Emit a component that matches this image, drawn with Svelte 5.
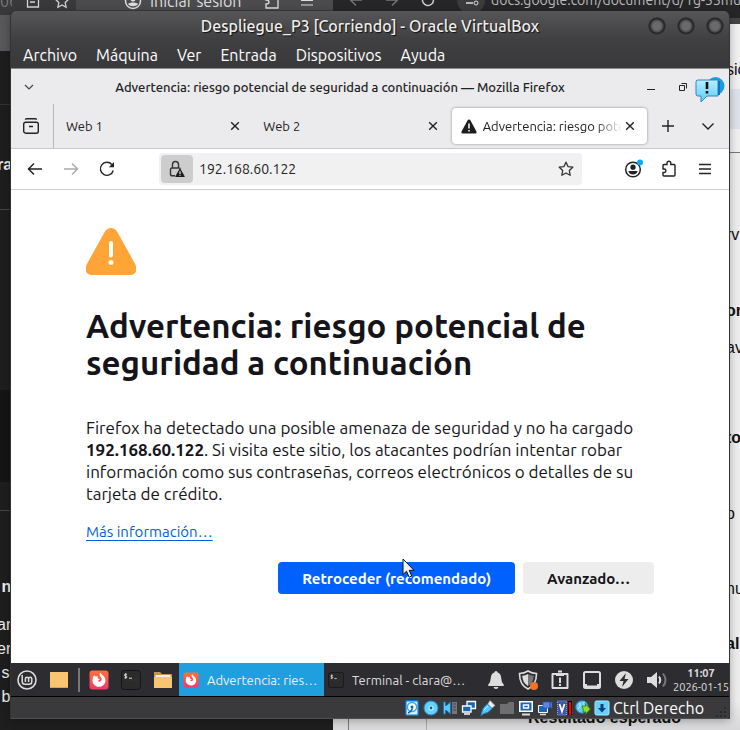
<script>
  const menus = ['Archivo', 'Máquina', 'Ver', 'Entrada', 'Dispositivos', 'Ayuda'];

  const tabs = [
    { title: 'Web 1' },
    { title: 'Web 2' },
    { title: 'Advertencia: riesgo potencial de seguridad', warning: true }
  ];

  // text of the windows behind, gap is the free space above each line
  const leftLines = [
    { text: 'ra', gap: 155, bold: true },
    { text: ' n', gap: 402, bold: true },
    { text: 'ar', gap: 18 },
    { text: 'er', gap: 4 },
    { text: ' s', gap: 4 },
    { text: ' b', gap: 4 }
  ];
  const rightLines = [
    { text: 'sic', gap: 60 },
    { text: 'rv', gap: 145 },
    { text: 'or', gap: 56, bold: true },
    { text: 'av', gap: 17 },
    { text: 'to', gap: 70, bold: true },
    { text: 'o', gap: 56 },
    { text: 'nu', gap: 55 },
    { text: 'al', gap: 35, bold: true }
  ];

  let activeTab = $state(2);
  let address = $state('192.168.60.122');
</script>

{#snippet cross()}
  <svg width="10" height="10" viewBox="0 0 10 10"><path d="M1.2 1.2l7.6 7.6M8.8 1.2L1.2 8.8" stroke="#222" stroke-width="1.4" /></svg>
{/snippet}

{#snippet firefox(size)}
  <svg width={size} height={size} viewBox="0 0 20 20">
    <defs>
      <linearGradient id="fox" x1="0" y1="0" x2="0" y2="1">
        <stop offset="0" stop-color="#ff7139" /><stop offset="1" stop-color="#f6376b" />
      </linearGradient>
    </defs>
    <rect x="0.5" y="0.5" width="19" height="19" rx="3" fill="url(#fox)" />
    <path d="M4.200 6.500l.9-1.300 1.400 1.300L9 6.200c-1.200 1.500-.2 2.600 1.800 2.800-.4 1.200-1.700 1-1.700 1.900.6 1.300 3.400.9 3.600-1.400.1-2-1.500-2.800-2-4.200-.3-1 0-1.900.6-2.600 1 1.700 5.200 3.700 5.200 7.800 0 3.700-2.900 6.300-6.500 6.300S3.500 14.200 3.500 10.700c0-1.700.2-3 .7-4.200z" fill="#fff" />
  </svg>
{/snippet}

{#snippet terminal(size)}
  <svg width={size} height={size} viewBox="0 0 20 20">
    <rect x="0.5" y="0.5" width="19" height="19" rx="3" fill="#2b2b2b" stroke="#151515" />
    <path d="M1.500 10h17" stroke="#333" />
    <path d="M6 4.200H4.300q-.8.100-.8.900t.8.900h.8q.8.100.8.900t-.8.900H3.400M4.700 3.300v5.400M8 8.200h3" fill="none" stroke="#ddd" />
  </svg>
{/snippet}

<div class="desktop">
  <div class="back left-browser" aria-hidden="true">
    <div class="back-bar">
      <span class="back-url">06</span>
      <svg width="14" height="14" viewBox="0 0 14 14"><path d="M1.500 1h11v12h-11zM4 5h6M4 8h5" fill="none" stroke="#d5d5d5" stroke-width="1.300" /></svg>
      <svg width="16" height="16" viewBox="0 0 16 16"><path d="M8 1.500l2 4.200 4.600.6-3.400 3.200.9 4.700L8 11.900l-4.100 2.300.9-4.700L1.400 6.300 6 5.700z" fill="none" stroke="#d5d5d5" stroke-width="1.300" /></svg>
      <span class="login">
        <svg width="18" height="18" viewBox="0 0 18 18"><circle cx="9" cy="9" r="7.500" fill="none" stroke="#ddd" stroke-width="1.500" /><circle cx="9" cy="7" r="2.500" fill="#ddd" /><path d="M4 12c2-2 8-2 10 0-2 3-8 3-10 0z" fill="#ddd" /></svg>
        Iniciar sesión
      </span>
      <svg width="16" height="16" viewBox="0 0 16 16"><path d="M2 3h4q0-2 2-2t2 2h4v12H2v-4q3 0 3-2T2 7z" fill="none" stroke="#ddd" stroke-width="1.300" /></svg>
      <svg class="burger" width="14" height="14" viewBox="0 0 14 14"><path d="M1 2h12M1 6.500h12M1 11h12" stroke="#ddd" stroke-width="1.200" /></svg>
    </div>
    <div class="back-lines">
      {#each leftLines as line}
        <p class:bold={line.bold} style:margin-top="{line.gap}px">{line.text}</p>
      {/each}
    </div>
  </div>

  <div class="back right-browser" aria-hidden="true">
    <div class="back-bar">
      <svg width="14" height="14" viewBox="0 0 14 14"><path d="M13 7H1.500M7 1.500L1.500 7 7 12.500" fill="none" stroke="#777" stroke-width="1.400" /></svg>
      <svg width="14" height="14" viewBox="0 0 14 14"><path d="M1 7h11.500M7 1.500L12.500 7 7 12.500" fill="none" stroke="#777" stroke-width="1.400" /></svg>
      <svg width="14" height="14" viewBox="0 0 14 14"><path d="M12.500 7A5.500 5.500 0 1 1 10 2.400" fill="none" stroke="#ccc" stroke-width="1.500" /></svg>
      <svg width="28" height="28" viewBox="0 0 28 28"><circle cx="14" cy="14" r="14" fill="#3b3b3d" /><path d="M8 11h7M9 17h7" stroke="#ddd" stroke-width="1.600" /><circle cx="18" cy="11" r="2" fill="none" stroke="#ddd" /><circle cx="19" cy="17" r="2" fill="none" stroke="#ddd" /></svg>
      <span>docs.google.com/document/d/1g-33mul</span>
    </div>
    <div class="back-lines">
      {#each rightLines as line}
        <p class:bold={line.bold} style:margin-top="{line.gap}px">{line.text}</p>
      {/each}
    </div>
    <strong class="result">Resultado esperado</strong>
  </div>

  <section class="vm">
    <header class="vm-title">
      <h2>Despliegue_P3 [Corriendo] - Oracle VirtualBox</h2>
      <div class="vm-buttons">
        <button aria-label="Minimizar"></button>
        <button aria-label="Maximizar"></button>
        <button aria-label="Cerrar"></button>
      </div>
    </header>

    <nav class="vm-menu">
      {#each menus as menu}
        <button>{menu}</button>
      {/each}
    </nav>

    <div class="guest">
      <div class="ff-title">
        <svg width="10" height="10" viewBox="0 0 10 10"><path d="M1 3l4 4 4-4" fill="none" stroke="#444" stroke-width="1.200" /></svg>
        <h3>Advertencia: riesgo potencial de seguridad a continuación — Mozilla Firefox</h3>
        <button aria-label="Minimizar"><svg width="10" height="10" viewBox="0 0 10 10"><path d="M1 7.500h8" stroke="#222" /></svg></button>
        <button aria-label="Restaurar"><svg width="10" height="10" viewBox="0 0 10 10"><path d="M1.500 3.500h5v5h-5zM3.500 1.500h5v5" fill="none" stroke="#222" /></svg></button>
        <svg class="notice" width="30" height="28" viewBox="0 0 30 28">
          <defs><linearGradient id="bubble" x1="0" y1="0" x2="0" y2="1"><stop offset="0" stop-color="#b5efff" /><stop offset="1" stop-color="#5bcdf8" /></linearGradient></defs>
          <circle cx="20.500" cy="10" r="9" fill="#179fdc" />
          <path d="M3 4h20v16H12l-6 6v-6H3q-2 0-2-2V6q0-2 2-2z" fill="url(#bubble)" stroke="#3583c9" />
          <path d="M24 5v14" stroke="#1772b5" stroke-width="2" />
          <path d="M12 6v7M12 15v2.500" stroke="#111" stroke-width="2.600" />
        </svg>
      </div>

      <div class="tab-bar">
        <button class="recent" aria-label="Ver pestañas recientes">
          <svg width="18" height="18" viewBox="0 0 18 18"><rect x="1.700" y="5.200" width="14.600" height="11" rx="2" fill="none" stroke="#222" stroke-width="1.400" /><path d="M3.500 2.700q0-.9 1-.9h9q1 0 1 .9M7 9.500h4" fill="none" stroke="#222" stroke-width="1.400" /></svg>
        </button>
        <div class="tabs">
          {#each tabs as tab, index}
            <div class="tab" class:active={index === activeTab}>
              <button class="tab-label" onclick={() => (activeTab = index)}>
                {#if tab.warning}
                  <svg width="16" height="15" viewBox="0 0 16 15"><path d="M8 .5q1 0 1.500 1l5.800 10.800q.9 2-1 2.200H1.700q-1.900-.2-1-2.200L6.500 1.500Q7 .5 8 .5z" fill="#1d1d1f" /><path d="M8 4.500v5M8 11v1.500" stroke="#fff" stroke-width="1.500" /></svg>
                {/if}
                <span>{tab.title}</span>
              </button>
              <button class="close" aria-label="Cerrar pestaña">{@render cross()}</button>
            </div>
          {/each}
        </div>
        <button class="new-tab" aria-label="Nueva pestaña"><svg width="14" height="14" viewBox="0 0 14 14"><path d="M7 1v12M1 7h12" stroke="#222" stroke-width="1.400" /></svg></button>
        <button class="all-tabs" aria-label="Listar pestañas"><svg width="14" height="14" viewBox="0 0 14 14"><path d="M1.500 4.500L7 10l5.500-5.500" fill="none" stroke="#222" stroke-width="1.400" /></svg></button>
      </div>

      <div class="toolbar">
        <button aria-label="Atrás"><svg width="16" height="16" viewBox="0 0 16 16"><path d="M15 8H1.800M7 2.500L1.500 8 7 13.500" fill="none" stroke="#222" stroke-width="1.500" /></svg></button>
        <button aria-label="Adelante"><svg width="16" height="16" viewBox="0 0 16 16"><path d="M1 8h13.200M9 2.500L14.500 8 9 13.500" fill="none" stroke="#aaa" stroke-width="1.500" /></svg></button>
        <button aria-label="Recargar"><svg width="16" height="16" viewBox="0 0 16 16"><path d="M14.200 9.500A6.500 6.500 0 1 1 12.800 3.500" fill="none" stroke="#222" stroke-width="1.400" /><path d="M15 1v5.200H9.800z" fill="#222" /></svg></button>
        <div class="url">
          <button class="lock" aria-label="Conexión no segura">
            <svg width="16" height="18" viewBox="0 0 16 18"><path d="M3.500 8V4.500a3 3 0 0 1 6 0V8M6 15.800H3q-1.500 0-1.500-1.500V9.500Q1.500 8 3 8h7q1.500 0 1.500.8" fill="none" stroke="#333" stroke-width="1.400" /><path d="M11 9l4.300 7.500H6.700z" fill="#1d1d1f" stroke="#1d1d1f" stroke-linejoin="round" /><path d="M11 11.300v2.700M11 14.800v1" stroke="#fff" stroke-width="1.100" /></svg>
          </button>
          <input type="text" aria-label="Dirección" bind:value={address} />
          <button class="star" aria-label="Añadir a marcadores">
            <svg width="16" height="16" viewBox="0 0 16 16"><path d="M8 1.200l2 4.400 4.800.6-3.500 3.300.9 4.800L8 12l-4.200 2.300.9-4.800L1.200 6.200 6 5.600z" fill="none" stroke="#333" stroke-width="1.300" stroke-linejoin="round" /></svg>
          </button>
        </div>
        <button aria-label="Cuenta"><svg width="20" height="20" viewBox="0 0 20 20"><circle cx="10" cy="10.500" r="7.300" fill="none" stroke="#222" stroke-width="1.500" /><circle cx="10" cy="8.200" r="2.600" fill="#222" /><path d="M5.300 12h9.400q-1 3.500-4.700 3.500T5.300 12z" fill="#222" /><circle cx="17" cy="3.500" r="3" fill="#00b0ff" /></svg></button>
        <button aria-label="Extensiones"><svg width="16" height="18" viewBox="0 0 16 18"><path d="M2 5.500q0-1 1-1h3V3.200a1.900 1.900 0 0 1 3.800 0v1.300H13q1 0 1 1V15q0 1-1 1H3q-1 0-1-1v-2.500h1.200a1.700 1.700 0 0 0 0-3.500H2z" fill="none" stroke="#222" stroke-width="1.400" /></svg></button>
        <button aria-label="Menú"><svg width="14" height="14" viewBox="0 0 14 14"><path d="M1 2.500h12M1 7h12M1 11.500h12" stroke="#222" stroke-width="1.300" /></svg></button>
      </div>

      <main>
        <div class="warning">
          <svg width="50" height="48" viewBox="0 0 50 48"><path d="M25 0q4 0 6.200 3.800l17.800 32Q52 42 48.500 45.500 47 47 43.500 47h-37Q3 47 1.500 45.500-2 42 1 35.800l17.800-32Q21 0 25 0z" fill="#ffa436" /><path d="M25 15v12.500" stroke="#fff" stroke-width="4" stroke-linecap="round" /><circle cx="25" cy="34.500" r="2.500" fill="#fff" /></svg>
          <h1>Advertencia: riesgo potencial de seguridad a continuación</h1>
          <p>Firefox ha detectado una posible amenaza de seguridad y no ha cargado <b>192.168.60.122</b>. Si visita este sitio, los atacantes podrían intentar robar información como sus contraseñas, correos electrónicos o detalles de su tarjeta de crédito.</p>
          <a href="#info">Más información…</a>
          <div class="actions">
            <button class="primary">
              Retroceder (recomendado)
              <svg class="pointer" width="14" height="22" viewBox="0 0 14 22"><path d="M1 1v15.500l3.500-3.300 2.600 6 2.600-1.200-2.500-5.700H12z" fill="#f2f2f2" stroke="#111" /></svg>
            </button>
            <button>Avanzado…</button>
          </div>
        </div>
      </main>

      <footer class="panel">
        <button aria-label="Menú Mint"><svg width="20" height="20" viewBox="0 0 20 20"><circle cx="10" cy="10" r="9" fill="none" stroke="#ddd" stroke-width="1.600" /><path d="M5.200 5v6.500q0 2.800 2.800 2.800h4q2.800 0 2.800-2.800V8.800a1.600 1.600 0 0 0-3.200 0V12M8.400 12V8.800a1.600 1.600 0 0 1 3.200 0" fill="none" stroke="#ddd" stroke-width="1.500" /></svg></button>
        <button aria-label="Escritorio"><svg width="18" height="18" viewBox="0 0 18 18"><rect y="1" width="18" height="16" fill="#f8c471" /><path d="M0 16.500h18" stroke="#d9a24f" /></svg></button>
        <span class="divider"></span>
        <button aria-label="Firefox">{@render firefox(20)}</button>
        <button aria-label="Terminal">{@render terminal(20)}</button>
        <button aria-label="Archivos"><svg width="20" height="18" viewBox="0 0 20 18"><path d="M1 1h6l2 2h10v5H1z" fill="#c89448" /><path d="M2.500 4h15v3h-15z" fill="#f5f0e8" /><path d="M1 6h18v11H1z" fill="#f8c471" /></svg></button>
        <button class="task current">{@render firefox(16)}<span>Advertencia: riesgo potencial</span></button>
        <button class="task">{@render terminal(16)}<span>Terminal - clara@clara-VirtualBox</span></button>
        <div class="tray">
          <svg width="20" height="20" viewBox="0 0 20 20"><path d="M10 1q1.500 0 1.700 1.500Q15 3.700 15.200 8q.2 4.500 2.500 6.500v1.500H2.300v-1.500Q4.600 12.500 4.800 8 5 3.700 8.300 2.500 8.500 1 10 1zM7.500 17h5q-.5 2-2.500 2t-2.500-2z" fill="#ddd" /></svg>
          <svg width="20" height="20" viewBox="0 0 20 20"><path d="M10 1q4 2.500 8.500 2.500Q18.500 15 10 19 1.500 15 1.500 3.500 6 3.500 10 1z" fill="none" stroke="#ddd" stroke-width="1.600" /><path d="M10 4v12Q4.500 13 4.200 5.800 7.500 5.500 10 4z" fill="#ddd" /><path d="M10 4v12q5.500-3 5.800-10.200Q12.500 5.500 10 4z" fill="#777" /><circle cx="16" cy="16" r="4" fill="#f37329" /></svg>
          <svg width="20" height="20" viewBox="0 0 20 20"><path d="M2.500 4h15v14h-15z" fill="none" stroke="#ddd" stroke-width="2" stroke-linejoin="round" /><path d="M6 3h8v3H6z" fill="#ddd" /><path d="M8 1.500h4" stroke="#ddd" stroke-width="2" /><path d="M10 7.500V13M10 14v2" stroke="#ddd" stroke-width="2" /></svg>
          <svg width="20" height="20" viewBox="0 0 20 20"><rect x="2" y="2" width="16" height="16" rx="1.500" fill="none" stroke="#ddd" stroke-width="2" /><path d="M3 17v-3h2v3zM15 17v-3h2v3zM5 15.500h10V17H5z" fill="#ddd" /></svg>
          <svg width="20" height="20" viewBox="0 0 20 20"><circle cx="10" cy="10" r="9" fill="#ddd" /><path d="M12 3l-6.500 8h4L8 17l6.500-8h-4z" fill="#2d2d31" /></svg>
          <svg width="22" height="20" viewBox="0 0 22 20"><path d="M1 7h4l6-5v16l-6-5H1z" fill="#ddd" /><path d="M13 6.500q2.500 3.500 0 7" fill="none" stroke="#ddd" stroke-width="2" /><path d="M17 3.500q5 6.500 0 13" fill="none" stroke="#777" stroke-width="2" /></svg>
        </div>
        <time><b>11:07</b><span>2026-01-15</span></time>
      </footer>
    </div>

    <footer class="status">
      <svg width="16" height="16" viewBox="0 0 16 16"><rect x="1.800" y=".8" width="12.400" height="14.400" rx="1" fill="#d5f3ff" stroke="#0872d6" stroke-width="1.500" /><circle cx="8" cy="7" r="4.600" fill="#fff" stroke="#35a9ee" stroke-width="1.500" /><circle cx="8" cy="7" r="1.500" fill="#0960a8" /><path d="M4 13q3-1 4.500-4.500" fill="none" stroke="#0960a8" stroke-width="1.500" /></svg>
      <svg width="16" height="16" viewBox="0 0 16 16"><circle cx="8" cy="8" r="7" fill="#61d2fb" stroke="#2788cf" /><circle cx="8" cy="8" r="2.600" fill="#c5f2ff" /><circle cx="8" cy="8" r="1.400" fill="#095ba5" /></svg>
      <svg width="16" height="16" viewBox="0 0 16 16"><path d="M10 2h5v12h-5z" fill="#777" /><path d="M11 4h3M11 7h3M11 10h3" stroke="#444" /><path d="M1.500 2v12h2v-3.500h1l4 3.500V2l-4 3.500h-1V2z" fill="#58c8f5" stroke="#1a70b9" /></svg>
      <svg width="16" height="16" viewBox="0 0 16 16"><path d="M6 1.500h8.500v7H6z" fill="#1767b7" stroke="#fff" stroke-width="1.300" /><path d="M1.500 6h8.500v6H1.500z" fill="#1767b7" stroke="#fff" stroke-width="1.300" /><path d="M3 14h6" stroke="#fff" stroke-width="1.500" /></svg>
      <svg width="16" height="16" viewBox="0 0 16 16"><path d="M10 .5l5 5-3.500 3-4-4z" fill="#e9eef2" stroke="#999" stroke-width=".6" /><path d="M7.500 4l4.500 4.500q-4 5-8 5L1 15.500l1-3.500q0-4 5.500-8z" fill="#5bc9f8" stroke="#2382ca" /><path d="M4 10l4-4" stroke="#c2efff" /></svg>
      <svg width="16" height="16" viewBox="0 0 16 16"><path d="M1 4h7l2-2h5v12H1z" fill="#6e6e70" /></svg>
      <svg width="16" height="16" viewBox="0 0 16 16"><rect x="1" y="1" width="14" height="11" fill="#fff" /><path d="M2.500 2.500h11v8h-11z" fill="#1767b7" /><path d="M5.500 5h5v3h-5z" fill="#1767b7" stroke="#fff" stroke-width="1.400" /><path d="M4 14.500h8" stroke="#ddd" stroke-width="2" /></svg>
      <svg width="16" height="16" viewBox="0 0 16 16"><path d="M1.500 5.500h9v7h-9z" fill="#1767b7" stroke="#fff" /><path d="M3 14.500h6" stroke="#ddd" stroke-width="1.500" /><path d="M6 2h7v6H6zM13 3.500l2-2v7l-2-2z" fill="#5a87e6" stroke="#2750a8" stroke-width=".7" /></svg>
      <svg width="16" height="16" viewBox="0 0 16 16"><rect x="1.500" y="1" width="9" height="14" fill="#3b55b5" stroke="#91a4ea" stroke-dasharray="1 1" /><path d="M3.500 4L6 11.500 8.500 4" fill="none" stroke="#fff" stroke-width="1.700" /><path d="M14 1v14" stroke="#000" stroke-width="4" /><path d="M14 2v13" stroke="#f00" stroke-width="2.400" /></svg>
      <svg width="16" height="16" viewBox="0 0 16 16"><circle cx="7" cy="7" r="6.200" fill="#62cdf7" stroke="#2382ca" /><path d="M3 9q3-2 2-6M9 1.500v5" stroke="#c8f1ff" fill="none" /><path d="M7 6h4l-1-2.500 5.500 5.500-5.500 6 1-3H8q1-2.500-1-6z" fill="#8be02f" stroke="#2d6c09" stroke-width=".8" /></svg>
      <svg width="16" height="16" viewBox="0 0 16 16"><rect x="1" y="1" width="14" height="14" rx="1.500" fill="#64d2fc" stroke="#a9e8ff" /><path d="M6.500 4h3v4H12l-4 4.500L4 8h2.500z" fill="#083e74" /></svg>
      <span>Ctrl Derecho</span>
      <svg class="grip" width="12" height="12" viewBox="0 0 12 12"><path d="M9 1h2v2H9zM5 5h2v2H5zM9 5h2v2H9zM1 9h2v2H1zM5 9h2v2H5zM9 9h2v2H9z" fill="#29292b" /></svg>
    </footer>
  </section>
</div>

<style>
  :global(body) {
    margin: 0;
  }

  .desktop {
    position: relative;
    box-sizing: border-box;
    min-height: 100vh;
    padding: 11px 10px;
    display: flex;
    overflow: hidden;
    background: #1e1e1e;
    font-family: Ubuntu, 'Noto Sans', sans-serif;
  }

  button,
  input {
    margin: 0;
    padding: 0;
    border: 0;
    background: none;
    font: inherit;
    color: inherit;
  }

  button {
    display: flex;
    align-items: center;
    justify-content: center;
  }

  svg {
    display: block;
    flex: none;
  }

  h1,
  h2,
  h3,
  p {
    margin: 0;
  }

  /* windows behind the virtual machine */
  .back {
    position: absolute;
    top: 0;
    bottom: 0;
    overflow: hidden;
  }

  .left-browser {
    left: 0;
    width: 45%;
    color: #eee;
    background: linear-gradient(#39393b 15px, #58585a 15px 51px, #1e1e1e 51px 104px, #333 104px 105px, #1e1e1e 105px 209px, #444 209px 210px, #1e1e1e 210px 390px, #151515 390px 482px, #1e1e1e 482px 510px, #444 510px 511px, #1e1e1e 511px);
  }

  .right-browser {
    left: 45%;
    right: 0;
    color: #111;
    background:
      linear-gradient(90deg, transparent 15px, #777 15px 16px, transparent 16px 93px, #aaa 93px 94px, transparent 94px) bottom / 100% 11px no-repeat,
      linear-gradient(#262628 18px, #444 18px 24px, #f0f0f1 24px 89px, #dde1e9 89px 129px, #efeff0 129px 152px, #777 152px 153px, #ededed 153px 700px, #d8d8da 730px);
  }

  .back-bar {
    display: flex;
    align-items: center;
    height: 16px;
    gap: 14px;
    white-space: nowrap;
    font-size: 16px;
    line-height: 20px;
    margin-top: -6px;
  }

  .left-browser .back-bar {
    height: 18px;
    margin-top: -8px;
    background: linear-gradient(90deg, #39393b 76px, #4b4b4d 76px);
    color: #ddd;
  }

  .right-browser .back-bar {
    margin-top: -8px;
  }

  .back-url {
    color: #777;
    width: 12px;
    overflow: hidden;
  }

  .login {
    display: flex;
    align-items: center;
    gap: 8px;
    padding: 0 8px 0 40px;
  }

  .burger {
    margin-left: 6px;
  }

  .right-browser .back-bar {
    padding-left: 16px;
    gap: 22px;
    color: #bbb;
    font-size: 14px;
  }

  .right-browser .back-bar span {
    margin-left: -16px;
  }

  .back-lines {
    margin: -10px 0 0 -3px;
    font: 16px/20px 'Liberation Sans', sans-serif;
    white-space: pre;
  }

  .right-browser .back-lines {
    width: 14px;
    margin: -8px 0 0 auto;
  }

  .bold {
    font-weight: 700;
  }

  .result {
    position: absolute;
    right: 59px;
    bottom: 2px;
    font: 700 16px/20px 'Liberation Sans', sans-serif;
  }

  .vm {
    position: relative;
    flex: 1;
    min-width: 0;
    display: flex;
    flex-direction: column;
    border: solid #333;
    border-width: 0 1px;
    border-radius: 6px 6px 0 0;
    background: #3a3a3c;
    box-shadow: 0 2px 8px rgba(0, 0, 0, 0.3);
    overflow: hidden;
  }

  .vm-title {
    display: grid;
    grid-template-columns: 1fr auto 1fr;
    align-items: center;
    height: 30px;
    background: linear-gradient(#565658, #3f3f41);
    color: #eee;
  }

  .vm-title h2 {
    grid-column: 2;
    font-size: 16px;
    line-height: 20px;
    font-weight: 500;
    text-shadow: 1px 1px 1px #111;
    white-space: nowrap;
  }

  .vm-buttons {
    display: flex;
    justify-content: flex-end;
    gap: 11px;
    padding-right: 5px;
  }

  .vm-buttons button {
    width: 18px;
    height: 18px;
    border-radius: 50%;
    background: radial-gradient(circle, #6a6a6d 0 4px, #4a4a4c 6px, #29292b 7px 8px, #444446 9px);
  }

  .vm-menu {
    display: flex;
    gap: 19px;
    height: 27px;
    padding: 0 12px;
    color: #fff;
    font-size: 16px;
    background: linear-gradient(#3f3f41, #39393b);
    border-bottom: 1px solid #8a8a8c;
  }

  .guest {
    flex: 1;
    display: flex;
    flex-direction: column;
    color: #222;
    background: #ebebed;
  }

  .ff-title {
    position: relative;
    display: flex;
    align-items: center;
    height: 35px;
    padding: 0 41px 0 13px;
    gap: 22px;
  }

  .ff-title h3 {
    flex: 1;
    text-align: center;
    font-size: 13px;
    font-weight: 500;
    white-space: nowrap;
  }

  .notice {
    position: absolute;
    right: 4px;
    top: 7px;
  }

  .tab-bar {
    display: flex;
    align-items: center;
    height: 44px;
    border-bottom: 1px solid #c6c6cf;
    font-size: 13px;
  }

  .recent {
    width: 43px;
    height: 44px;
    padding-right: 2px;
    border-right: 1px solid #b5b5bb;
    box-sizing: border-box;
  }

  .tabs {
    flex: 1;
    min-width: 0;
    display: flex;
    gap: 2px;
    padding: 0 1px 0 3px;
  }

  .tab {
    flex: 1;
    min-width: 0;
    height: 36px;
    display: flex;
    align-items: center;
    padding: 0 12px 0 9px;
    box-sizing: border-box;
    border-radius: 4px;
  }

  .tab.active {
    background: #fff;
    box-shadow: 0 0 3px rgba(0, 0, 0, 0.4);
  }

  .tab-label {
    flex: 1;
    min-width: 0;
    justify-content: flex-start;
    gap: 6px;
    overflow: hidden;
    white-space: nowrap;
  }

  .tab.active .tab-label {
    mask-image: linear-gradient(90deg, #000 82%, transparent 98%);
  }

  .new-tab,
  .all-tabs {
    width: 40px;
    height: 32px;
  }

  .all-tabs {
    margin-right: 1px;
  }

  .toolbar {
    display: flex;
    align-items: center;
    height: 40px;
    padding: 0 6px;
    background: #fff;
    border-bottom: 1px solid #ccccd2;
  }

  .toolbar > button {
    width: 36px;
    height: 32px;
  }

  .url {
    flex: 1;
    min-width: 0;
    display: flex;
    align-items: center;
    height: 32px;
    margin: 0 33px 0 34px;
    padding-left: 2px;
    border-radius: 4px;
    background: #f1f1f1;
  }

  .lock {
    width: 32px;
    height: 28px;
    border-radius: 4px;
    background: #cdcdcd;
  }

  .url input {
    flex: 1;
    min-width: 0;
    padding-left: 6px;
    font-size: 14px;
  }

  .star {
    width: 32px;
    height: 32px;
  }

  main {
    flex: 1;
    padding: 38px 75px;
    background: #fff;
    color: #15141a;
  }

  .warning {
    max-width: 568px;
  }

  h1 {
    margin-top: 31px;
    font-size: 33px;
    line-height: 37px;
    font-weight: 600;
  }

  .warning p {
    margin-top: 36px;
    font-size: 17px;
    line-height: 22px;
  }

  .warning a {
    display: inline-block;
    margin-top: 17px;
    font-size: 15px;
    line-height: 20px;
    color: #0060df;
    text-underline-offset: 3px;
  }

  .actions {
    display: flex;
    justify-content: flex-end;
    gap: 8px;
    margin-top: 20px;
  }

  .actions button {
    position: relative;
    height: 32px;
    padding: 0 24px;
    border-radius: 4px;
    background: #ededed;
    font-size: 15px;
    font-weight: 600;
  }

  .actions .primary {
    background: #0061fe;
    color: #fff;
  }

  .pointer {
    position: absolute;
    top: -4px;
    right: 99px;
  }

  .panel {
    display: flex;
    align-items: center;
    height: 33px;
    background: #2d2d31;
    border-bottom: 1px solid #000;
    color: #ddd;
    font-size: 13px;
  }

  .panel > button {
    width: 32px;
    height: 33px;
  }

  .divider {
    width: 2px;
    height: 24px;
    margin: 0 3px;
    background: #77777a;
  }

  .panel .task {
    width: 145px;
    padding: 0 0 0 4px;
    gap: 8px;
    box-sizing: border-box;
  }

  .panel .current {
    background: #209fdf;
    color: #eee;
  }

  .task span {
    flex: 1;
    overflow: hidden;
    white-space: nowrap;
    text-overflow: ellipsis;
    text-align: left;
  }

  .tray {
    flex: 1;
    display: flex;
    justify-content: flex-end;
    gap: 12px;
    padding-right: 5px;
  }

  time {
    display: flex;
    flex-direction: column;
    align-items: center;
    font-size: 11px;
    line-height: 14px;
  }

  .status {
    display: flex;
    align-items: center;
    justify-content: flex-end;
    gap: 3px;
    height: 21px;
    padding-right: 2px;
    color: #fff;
    font-size: 16px;
    border-bottom: 1px solid #505052;
  }

  .status span {
    padding-right: 8px;
  }

  .grip {
    align-self: flex-end;
  }
</style>
